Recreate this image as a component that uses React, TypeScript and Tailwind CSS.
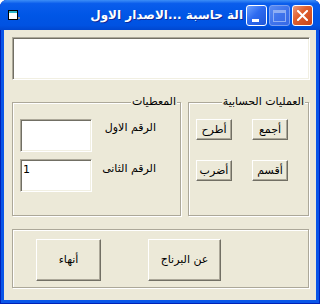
import React from "react";

const F = "font-['DejaVu_Sans',sans-serif]";
const SUNK =
  "bg-white border border-t-[#ACA899] border-l-[#ACA899] border-b-white border-r-white shadow-[inset_1px_1px_0_#716F64,inset_-1px_-1px_0_#F1EFE2]";
const RAISED =
  "flex items-center justify-center bg-[#ECE9D8] border border-t-white border-l-white border-b-[#716F64] border-r-[#716F64] shadow-[inset_-1px_-1px_0_#ACA899] text-[11px] leading-[14px] text-black";
const ETCH =
  "border border-[#ACA899] shadow-[1px_1px_0_#ffffff,inset_1px_1px_0_#ffffff]";

function Btn({ children, className }: { children: React.ReactNode; className: string }) {
  return (
    <div dir="rtl" className={`${RAISED} ${className}`}>
      {children}
    </div>
  );
}

function Group({ title, className, children }: { title: string; className: string; children: React.ReactNode }) {
  return (
    <fieldset dir="rtl" className={`${ETCH} pr-[3px] ${className}`}>
      <legend className="px-[1px] text-[11px] leading-[12px] text-black bg-[#ECE9D8]">{title}</legend>
      <div dir="ltr" className="-mr-[3px]">
        {children}
      </div>
    </fieldset>
  );
}

export default function App() {
  return (
    <div className={`w-[320px] h-[307px] bg-white ${F}`}>
      <div className="w-[320px] h-[304px] flex flex-col rounded-t-[7px] overflow-hidden bg-[#0A56E8] shadow-[inset_1px_0_0_#0022B8,inset_-1px_0_0_#0022B8,inset_0_-1px_0_#0022B8]">
        {/* title bar */}
        <div className="h-[30px] flex items-start bg-[linear-gradient(to_bottom,#3D8EF7_0%,#0A5DEC_12%,#0056E6_50%,#0052E2_85%,#0047CF_100%)]">
          <svg className="ml-[8px] mt-[10px]" width="13" height="11" viewBox="0 0 13 11">
            <rect x="0.5" y="0.5" width="9" height="9" fill="#ffffff" stroke="#000000" />
            <rect x="1" y="1" width="8" height="2" fill="#2AB7C9" />
            <rect x="10" y="7" width="2" height="2" fill="#8A8A8A" />
          </svg>
          <div className="flex-1" />
          <span
            dir="rtl"
            className="mt-[7px] mr-[3px] text-[12px] leading-[16px] font-bold text-white [text-shadow:1px_1px_0_#0C2A9A]"
          >
            الة حاسبة ...الاصدار الاول
          </span>
          {/* minimize */}
          <div className="mt-[5px] w-[21px] h-[21px] rounded-[3px] border border-white bg-[linear-gradient(135deg,#6EA2FF_0%,#2E6BF0_45%,#1F56D8_100%)] pl-[5px] pt-[13px]">
            <div className="w-[7px] h-[3px] bg-white" />
          </div>
          {/* maximize (disabled) */}
          <div className="mt-[5px] ml-[2px] w-[21px] h-[21px] rounded-[3px] border border-[#7A9FF0] bg-[linear-gradient(135deg,#5A8BF2_0%,#3F74EC_50%,#3668E6_100%)] pl-[3px] pt-[4px]">
            <div className="w-[13px] h-[12px] border border-[#8EAEF4] border-t-[3px]" />
          </div>
          {/* close */}
          <div className="mt-[5px] ml-[2px] w-[21px] h-[21px] rounded-[3px] border border-white bg-[linear-gradient(135deg,#E99A7E_0%,#E0602F_40%,#CC4418_100%)] flex items-center justify-center">
            <svg width="11" height="11" viewBox="0 0 11 11">
              <path d="M1 1 L10 10 M10 1 L1 10" stroke="#ffffff" strokeWidth="2" strokeLinecap="square" />
            </svg>
          </div>
          <div className="w-[7px]" />
        </div>

        {/* client */}
        <div className="flex-1 mx-[4px] mb-[4px] bg-[#ECE9D8] pl-[8px] pt-[7px] flex flex-col">
          <div className={`${SUNK} w-[298px] h-[43px]`} />

          <div className="mt-[16px] flex gap-[7px] items-stretch">
            <Group title="المعطيات" className="w-[169px]">
              <div className="pl-[7px] pt-[11px] pb-[23px] flex flex-col gap-[7px]">
                <div className="flex items-start">
                  <div className={`${SUNK} w-[72px] h-[33px]`} />
                  <div dir="rtl" className="w-[64px] mt-[2px] text-[11px] leading-[14px] text-black text-right">
                    الرقم الاول
                  </div>
                </div>
                <div className="flex items-start">
                  <div className={`${SUNK} w-[72px] h-[33px] pl-[2px] pt-[3px] text-[11px] leading-[14px] text-black`}>
                    1
                  </div>
                  <div dir="rtl" className="w-[64px] mt-[3px] text-[11px] leading-[14px] text-black text-right">
                    الرقم الثانى
                  </div>
                </div>
              </div>
            </Group>
            <Group title="العمليات الحسابية" className="w-[121px]">
              <div className="pl-[7px] pt-[11px] grid grid-cols-[36px_36px] gap-x-[20px] gap-y-[20px]">
                <Btn className="h-[21px]">أطرح</Btn>
                <Btn className="h-[21px]">أجمع</Btn>
                <Btn className="h-[21px]">أضرب</Btn>
                <Btn className="h-[21px]">أقسم</Btn>
              </div>
            </Group>
          </div>

          <div className={`${ETCH} mt-[13px] w-[297px] h-[59px] pl-[23px] pt-[9px] flex items-start gap-[47px]`}>
            <Btn className="w-[65px] h-[42px]">أنهاء</Btn>
            <Btn className="w-[73px] h-[42px]">عن البرناج</Btn>
          </div>
        </div>
      </div>
    </div>
  );
}
